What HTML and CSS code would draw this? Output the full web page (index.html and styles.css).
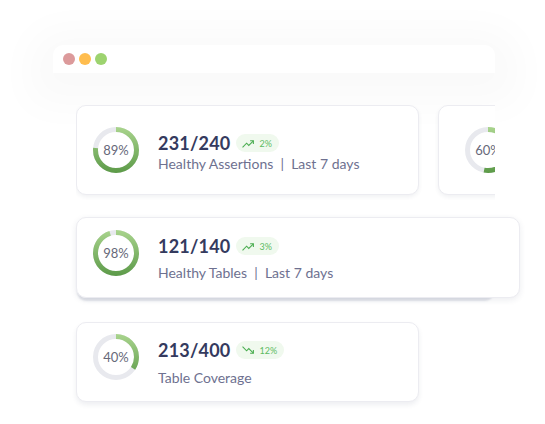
FILE: index.html
```html
<!DOCTYPE html>
<html>
<head>
<meta charset="utf-8">
<link rel="stylesheet" href="styles.css">
</head>
<body>
<svg class="defs" width="0" height="0">
  <defs>
    <linearGradient id="g" x1="46" y1="0" x2="0" y2="0" gradientUnits="userSpaceOnUse">
      <stop offset="0" stop-color="#a9d48d"/>
      <stop offset="1" stop-color="#5c9a48"/>
    </linearGradient>
  </defs>
</svg>
<div class="window">
  <div class="titlebar">
    <span class="dot red"></span><span class="dot yellow"></span><span class="dot green"></span>
  </div>
  <div class="content">
    <div class="row1">
      <div class="card card-a">
        <div class="ring">
          <svg width="46" height="46" viewBox="0 0 46 46"><circle class="track" cx="23" cy="23" r="20.5"/><circle class="arc" cx="23" cy="23" r="20.5" stroke-dasharray="98 200"/></svg>
          <span class="pct">89%</span>
        </div>
        <div class="info">
          <div class="headline"><span class="value">231/240</span><span class="badge"><svg width="13" height="9" viewBox="0 0 24 16"><path d="M1 15 L8.5 7.5 L12.5 11.5 L21 3"/><path d="M15 3 H21 V9"/></svg>2%</span></div>
          <div class="sub">Healthy Assertions &nbsp;|&nbsp; Last 7 days</div>
        </div>
      </div>
      <div class="card card-b">
        <div class="ring">
          <svg width="46" height="46" viewBox="0 0 46 46"><circle class="track" cx="23" cy="23" r="20.5"/><circle class="arc" cx="23" cy="23" r="20.5" stroke-dasharray="68 200"/></svg>
          <span class="pct">60%</span>
        </div>
      </div>
    </div>
    <div class="lift">
      <div class="card card-c">
        <div class="ring">
          <svg width="46" height="46" viewBox="0 0 46 46"><circle class="track" cx="23" cy="23" r="20.5"/><circle class="arc" cx="23" cy="23" r="20.5" stroke-dasharray="122 200"/></svg>
          <span class="pct">98%</span>
        </div>
        <div class="info">
          <div class="headline"><span class="value">121/140</span><span class="badge"><svg width="13" height="9" viewBox="0 0 24 16"><path d="M1 15 L8.5 7.5 L12.5 11.5 L21 3"/><path d="M15 3 H21 V9"/></svg>3%</span></div>
          <div class="sub">Healthy Tables &nbsp;|&nbsp; Last 7 days</div>
        </div>
      </div>
    </div>
    <div class="card card-d">
      <div class="ring">
        <svg width="46" height="46" viewBox="0 0 46 46"><circle class="track" cx="23" cy="23" r="20.5"/><circle class="arc" cx="23" cy="23" r="20.5" stroke-dasharray="44 200"/></svg>
        <span class="pct">40%</span>
      </div>
      <div class="info">
        <div class="headline"><span class="value">213/400</span><span class="badge"><svg width="13" height="9" viewBox="0 0 24 16"><path d="M1 1 L8.5 8.5 L12.5 4.5 L21 13"/><path d="M15 13 H21 V7"/></svg>12%</span></div>
        <div class="sub">Table Coverage</div>
      </div>
    </div>
  </div>
</div>
</body>
</html>
```

FILE: styles.css
```css
html, body {
  margin: 0;
  padding: 0;
  background: #ffffff;
}
body {
  width: 545px;
  height: 424px;
  overflow: hidden;
  font-family: "Lato", "Open Sans", sans-serif;
}
.defs {
  position: absolute;
  width: 0;
  height: 0;
}
.window {
  margin: 45px 0 0 53px;
  width: 442px;
}
.titlebar {
  height: 28px;
  background: #ffffff;
  border-radius: 10px 10px 0 0;
  display: flex;
  align-items: center;
  gap: 4px;
  padding-left: 10px;
  box-shadow: 0 8px 40px 24px rgba(0, 0, 0, 0.025);
}
.dot {
  width: 12px;
  height: 12px;
  border-radius: 50%;
}
.red { background: #dc9a9b; }
.yellow { background: #ffbd4e; }
.green { background: #9dd36f; }
.content {
  padding: 32px 0 0 23px;
}
.row1 {
  display: flex;
  gap: 19px;
  width: 419px;
  overflow: hidden;
  padding: 0 0 6px;
  margin-bottom: 16px;
}
.card {
  box-sizing: border-box;
  background: #ffffff;
  border: 1px solid #ececf1;
  border-radius: 10px;
  box-shadow: 0 2px 4px rgba(40, 50, 90, 0.07);
  display: flex;
  align-items: flex-start;
  padding-left: 16px;
  flex-shrink: 0;
}
.card-a {
  width: 343px;
  height: 90px;
  padding-top: 21px;
}
.card-b {
  width: 100px;
  height: 90px;
  padding-top: 21px;
  padding-left: 26px;
}
.lift {
  width: 419px;
  height: 81px;
  border-radius: 10px;
  box-shadow: 0 4px 2px -1px rgba(70, 80, 120, 0.16);
  margin-bottom: 24px;
}
.card-c {
  width: 444px;
  height: 81px;
  padding-top: 12px;
  box-shadow: 0 2px 6px rgba(40, 50, 90, 0.09);
}
.card-d {
  width: 343px;
  height: 80px;
  padding-top: 11px;
  box-shadow: 0 3px 5px rgba(40, 50, 90, 0.08);
}
.ring {
  display: grid;
  place-items: center;
  width: 46px;
  height: 46px;
  flex-shrink: 0;
}
.ring > * {
  grid-area: 1 / 1;
}
.ring svg {
  transform: rotate(-90deg);
}
.track {
  fill: none;
  stroke: #e8e9ee;
  stroke-width: 5;
}
.arc {
  fill: none;
  stroke: url(#g);
  stroke-width: 5;
}
.pct {
  font-size: 13px;
  color: #676879;
  font-weight: 400;
}
.info {
  margin: 4px 0 0 19px;
  display: flex;
  flex-direction: column;
}
.card-c .info { gap: 6px; }
.card-d .info { gap: 7px; }
.headline {
  display: flex;
  align-items: center;
  height: 24px;
}
.value {
  font-size: 18px;
  font-weight: 700;
  color: #343a5e;
  letter-spacing: 0.2px;
}
.badge {
  margin-left: 6px;
  height: 18px;
  padding: 0 7px 0 6px;
  border-radius: 9px;
  background: #f0f9ee;
  display: flex;
  align-items: center;
  gap: 4px;
  font-size: 9px;
  color: #5dbb62;
}
.badge svg path {
  fill: none;
  stroke: #4cae52;
  stroke-width: 2;
}
.sub {
  font-size: 14px;
  line-height: 17px;
  color: #6e7190;
}
```
